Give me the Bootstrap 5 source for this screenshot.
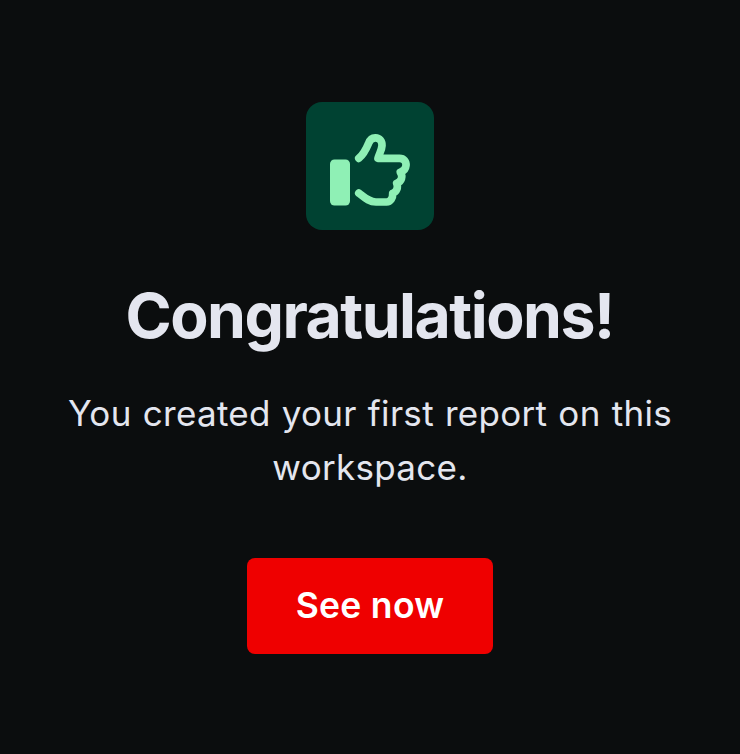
<!DOCTYPE html>
<html lang="en">
<head>
<meta charset="utf-8">
<meta name="viewport" content="width=device-width, initial-scale=1">
<title>Congratulations</title>
<link href="https://cdn.jsdelivr.net/npm/bootstrap@5.3.0/dist/css/bootstrap.min.css" rel="stylesheet">
<style>
body{background:#0b0d0e;color:#e4e6ef;font-family:Inter,sans-serif;height:754px;padding-top:102px;overflow:hidden}
.thumb-tile{width:128px;height:128px;border-radius:16px;background:#004232;color:#8ff0b5}
.headline{font-size:62.5px;line-height:80px;font-weight:700;letter-spacing:-1.5px;margin:45px 0 0;padding-right:1px;color:#e4e6ef;white-space:nowrap}
.message{font-size:35px;line-height:54px;letter-spacing:.3px;word-spacing:.9px;margin:31px 0 0;color:#e4e6ef}
.btn-see{--bs-btn-bg:#ef0000;--bs-btn-color:#fff;--bs-btn-hover-bg:#d80000;--bs-btn-hover-color:#fff;width:246px;height:96px;border:0;border-radius:8px;padding:0;font-size:35.5px;font-weight:600;letter-spacing:.3px;margin-top:64px}
</style>
</head>
<body>
<main class="d-flex flex-column align-items-center text-center">
<div class="thumb-tile">
<svg class="d-block" width="128" height="128" viewBox="0 0 128 128" aria-hidden="true">
<rect x="24" y="57.500" width="20" height="46" rx="4.500" fill="currentColor"/>
<path d="M52.800 56.300C57.500 52.500 60 47.500 62.500 41.500C64 37.500 66.500 35.800 69.500 35.900C73.500 36 76.200 39 76 43.500C75.800 48 73.500 51 72 56.300H93.500C98 56.300 100.300 59.500 100 63.500C99.700 67 97.500 69.300 94.300 70.200C97.300 74.500 95.500 79.500 90.700 81.300C92.500 85.500 90.500 90 86.700 91.300C87 96 84.500 100 80.500 100H70C62.500 100 58 95 52.800 91.100" fill="none" stroke="currentColor" stroke-width="7.700" stroke-linecap="round" stroke-linejoin="round"/>
</svg>
</div>
<h1 class="headline">Congratulations!</h1>
<p class="message">You created your first report on this<br>workspace.</p>
<button type="button" class="btn btn-see">See now</button>
</main>
<script src="https://cdn.jsdelivr.net/npm/bootstrap@5.3.0/dist/js/bootstrap.bundle.min.js"></script>
</body>
</html>
